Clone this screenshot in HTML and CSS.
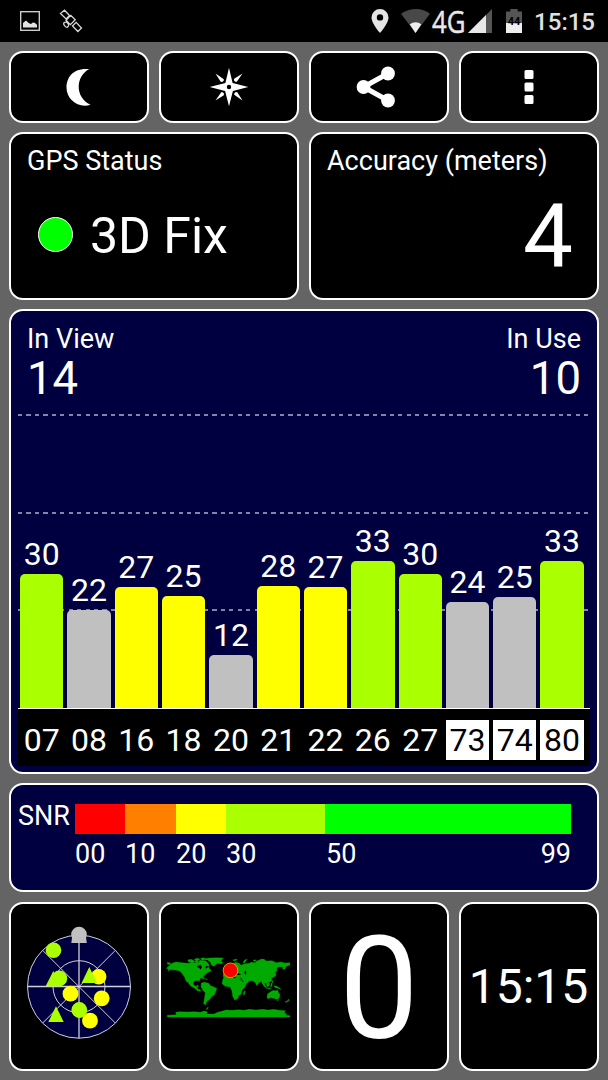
FILE: index.html
```html
<!DOCTYPE html>
<html lang="en">
<head>
<meta charset="utf-8">
<title>GPS Test</title>
<link rel="stylesheet" href="styles.css">
</head>
<body>
<header class="statusbar">
  <svg class="sb-picture" width="20" height="20" viewBox="0 0 20 20"><rect x=".7" y=".7" width="18.6" height="18.6" fill="none" stroke="#d8d8d8" stroke-width="1.3"/><path d="M3 16.5v-4.6l3-2.3 2.7 2.5 2.2.8 2-1.5 1.8.3 2.3 2v2.8z" fill="#e2e2e2"/></svg>
  <svg class="sb-satellite" width="24" height="24" viewBox="0 0 24 24" fill="none" stroke="#d8d8d8" stroke-width="1.3"><path d="M1.5 4.5l4-3.3 5 5.3-3.4 3.4zM13.5 17l3.6-3.6 5.4 5.6-3.6 3.5zM7 11.2l4.8-4.8 4.4 4.4-4.8 4.8zM4.7 14.1c1.2-1 2.2-1.2 3-.9 1 .8 1.8 1.8 2 3-.2 1-.8 1.6-1.4 2.1-1.7-.1-4-2.3-3.6-4.2z"/></svg>
  <div class="sb-right">
    <svg class="sb-pin" width="18" height="24" viewBox="0 0 18 24"><path fill="#e4e4e4" fill-rule="evenodd" d="M9 0a8.500 8.500 0 0 0-8.500 8.500C.5 14.500 9 24 9 24s8.500-9.500 8.500-15.500A8.500 8.500 0 0 0 9 0zm0 5.200a3.200 3.200 0 1 1 0 6.400 3.200 3.200 0 0 1 0-6.400z"/></svg>
    <svg class="sb-wifi" width="30" height="24" viewBox="0 0 30 24"><path d="M0 4.800C8.500-1.600 21.500-1.600 29 4.800L14.500 24z" fill="#484848"/><path d="M8.800 15.500c3.600-2.900 8-2.900 11.500 0L14.500 24z" fill="#eee"/></svg>
    <svg class="sb-network" width="35" height="34" viewBox="0 0 35 34"><text class="network-label" x="1" y="28" textLength="33.500" lengthAdjust="spacingAndGlyphs">4G</text></svg>
    <svg class="sb-signal" width="24" height="24" viewBox="0 0 24 24"><path d="M0 24L24 0v24z" fill="#555"/><path d="M0 24L18 6v18z" fill="#e8e8e8"/></svg>
    <svg class="sb-battery" width="16" height="24" viewBox="0 0 16 24"><path d="M0 2.500h4.300V0h7.400v2.500H16V14H0z" fill="#555"/><path d="M0 14h16v10H0z" fill="#eee"/><text class="battery-label" x="8" y="16">44</text></svg>
    <span class="sb-time">15:15</span>
  </div>
</header>
<main class="dashboard">
  <section class="row row-tools">
    <button class="panel tool" aria-label="Night mode"><svg class="moon" width="26" height="40" viewBox="0 0 26 40"><path d="M24.200 2.100C8 .5 1.500 10.500 1.500 20.500c0 12 11.500 21 24 17.300C10 30.500 10 10 24.200 2.100z"/></svg></button>
    <button class="panel tool" aria-label="Compass"><svg width="40" height="40" viewBox="-20 -20 40 40"><path fill-rule="evenodd" d="M0-19.300L3.600-4 19.300 0 3.900 4 0 19.300-3.900 4-19.300 0-3.600-4zM0-2.200a2.200 2.200 0 1 0 0 4.400 2.200 2.200 0 0 0 0-4.400z"/><g id="ray"><path d="M-13.500-13.500L-5.200-7.800-5.300-6.200-6.800-4.900-8.300-5.200z"/></g><use href="#ray" transform="rotate(90)"/><use href="#ray" transform="rotate(180)"/><use href="#ray" transform="rotate(270)"/></svg></button>
    <button class="panel tool" aria-label="Share"><svg class="share" width="40" height="42" viewBox="0 0 40 42"><path d="M32 7.500L7.500 21 32 34.500" fill="none" stroke="#fff" stroke-width="5"/><circle cx="7.500" cy="21" r="6.900"/><circle cx="32" cy="7.500" r="6.900"/><circle cx="32" cy="34.500" r="6.900"/></svg></button>
    <button class="panel tool" aria-label="Menu"><svg width="10" height="36" viewBox="0 0 10 36"><rect x=".5" y="1" width="9" height="9" rx="1.500"/><rect x=".5" y="13.500" width="9" height="9" rx="1.500"/><rect x=".5" y="26" width="9" height="9" rx="1.500"/></svg></button>
  </section>

  <section class="row row-fix">
    <div class="panel card">
      <h2 class="label">GPS Status</h2>
      <div class="fix"><span class="fix-dot"></span><span class="fix-text">3D Fix</span></div>
    </div>
    <div class="panel card">
      <h2 class="label">Accuracy (meters)</h2>
      <div class="accuracy">4</div>
    </div>
  </section>

  <section class="panel chart">
    <div class="plot">
      <div class="gridline grid-a"></div><div class="gridline grid-b"></div><div class="gridline grid-c"></div>
      <div class="counts">
        <div><div class="count-label">In View</div><div class="count">14</div></div>
        <div class="count-right"><div class="count-label">In Use</div><div class="count">10</div></div>
      </div>
      <div class="bars">
        <div class="col"><span>30</span><i class="bar lime" style="height:134px"></i></div>
        <div class="col"><span>22</span><i class="bar grey" style="height:98px"></i></div>
        <div class="col"><span>27</span><i class="bar yellow" style="height:121px"></i></div>
        <div class="col"><span>25</span><i class="bar yellow" style="height:112px"></i></div>
        <div class="col"><span>12</span><i class="bar grey" style="height:53px"></i></div>
        <div class="col"><span>28</span><i class="bar yellow" style="height:122px"></i></div>
        <div class="col"><span>27</span><i class="bar yellow" style="height:121px"></i></div>
        <div class="col"><span>33</span><i class="bar lime" style="height:147px"></i></div>
        <div class="col"><span>30</span><i class="bar lime" style="height:134px"></i></div>
        <div class="col"><span>24</span><i class="bar grey" style="height:106px"></i></div>
        <div class="col"><span>25</span><i class="bar grey" style="height:111px"></i></div>
        <div class="col"><span>33</span><i class="bar lime" style="height:147px"></i></div>
      </div>
    </div>
    <div class="sats">
      <span>07</span><span>08</span><span>16</span><span>18</span><span>20</span><span>21</span><span>22</span><span>26</span><span>27</span><span class="glonass">73</span><span class="glonass">74</span><span class="glonass">80</span>
    </div>
  </section>

  <section class="panel snr">
    <div class="snr-title">SNR</div>
    <div class="scale">
      <div class="scale-bar"><i class="red"></i><i class="orange"></i><i class="yellow"></i><i class="lime"></i><i class="green"></i></div>
      <div class="scale-labels"><span>00</span><span>10</span><span>20</span><span>30</span><span class="last"><b>50</b><b>99</b></span></div>
    </div>
  </section>

  <section class="row row-bottom">
    <div class="panel tile">
      <svg width="136" height="165" viewBox="11 904 136 165">
        <circle cx="79" cy="986.700" r="51.500" fill="#000040"/>
        <g fill="none" stroke="#d0d0dc" stroke-width="1">
          <circle cx="79" cy="986.700" r="51.500"/><circle cx="79" cy="986.700" r="26"/>
          <path d="M42.600 950.300l72.800 72.800M115.400 950.300l-72.800 72.800"/>
          <path d="M79 935v103.300M27.500 986.500h103" stroke-width="1.300"/>
        </g>
        <g fill="#c0c0c0"><circle cx="79" cy="934.500" r="7.800"/><path d="M71.300 943l1-7h13.500l1 7z"/></g>
        <g fill="#ff0"><circle cx="98.700" cy="976.700" r="7.700"/><circle cx="70.500" cy="993.700" r="7.900"/><circle cx="101.700" cy="998.300" r="7.900"/><circle cx="90" cy="1020.700" r="7.900"/></g>
        <g fill="#af0"><circle cx="53.500" cy="950.300" r="7.800"/><circle cx="59.300" cy="978.500" r="7.900"/><circle cx="79.300" cy="1010" r="7.900"/><path d="M89.300 967l7.700 16H81.600zM53.300 971l7.700 15.200H45.600zM56 1006.300l7.700 15.700H48.300z"/></g>
      </svg>
    </div>
    <div class="panel tile">
      <svg width="136" height="165" viewBox="18 27 408 495">
        <g fill="#00aa00" stroke="#00aa00" stroke-width="1" stroke-linejoin="bevel">
          <path d="M37 202l10 2-2 5-8-2zM51 205l12-4 25 3 14 1 10-3 8 2 10-1 3-6 5-2 5 7 8 2 4 8-6 4 4 5 8-5 3 8 6 3-8 3-7 5-6 4-4 6-9 4-3 10-5-3-9 1-5 6 2 7 7 4 6-4 1 5-5 3 5 5 7 2-1 4-9-2-9-8-12-7-6-9-7-5-4-11-7-11-8-8-12-3-16-1-7 5 3-6-8-3z"/>
          <path d="M98 195l10-2 7 3 6 5-10 2-10-2zM118 193l8-3 9 2-4 4-9 1zM137 190l10-2 3 3-10 3zM140 196l12 2 8 7 3 9-7-1-7-8-11-3zM158 222l6-1 3 5-5 3zM122 196l8 1-2 7-7-1z"/>
          <path d="M140 192l25-3 22-1 18 1-5 5-3 9-12 3-8 8-7-3-4-9-8-7-18-1z"/>
          <path d="M134 247l8-1 8 4-7 1zM151 251l7 1-3 2z"/>
          <path d="M139 264l9-2 13 3 6 7 8 3 10 5-2 7-5 12-9 7-6 8-7 5-4 8 1 3-7-4 2-14 3-19-6-5-7-13z"/>
          <path d="M190 202l10-2 4 3-6 4-7-2z"/>
          <path d="M204 251l8-5 16 1 10 3 14-2 6 10 6 10 10-1-5 10-8 9-2 11-8 5-3 9-9 4-6-11-2-15-5-13-15-2-10-8z"/>
          <path d="M266 290l5-3-2 11-4 3z"/>
          <path d="M204 237L213 234 217 226 226 221 229 211 241 202 253 205 258 211 267 207 282 205 289 202 300 203 305 198 317 194 327 193 334 198 351 197 363 203 377 201 390 204 405 203 404 211 394 214 389 223 383 222 385 216 373 215 365 218 366 227 361 232 363 241 356 247 349 250 350 257 345 261 338 262 336 265 329 264 329 272 323 267 320 260 314 261 308 268 306 273 300 262 292 257 281 258 280 262 273 267 262 270 257 258 256 251 246 252 241 245 231 244 227 252 220 244 214 248 211 254 205 247z"/>
          <path d="M233 195l12-3 1 3-9 3zM264 203l4-7 9-4-5 7-4 5zM294 196l6-2 4 3-6 2zM315 194l8-2 6 4-8 1zM206 224l6-6 2 9-5 4zM359 226l3 5-6 10-8 4 5-8 5-4zM321 260l8 9 6 8-3 1-7-7zM334 268l9-7 1 10-7 5zM348 264l4 2-2 9-4-1 2-5zM334 278l14 2-1 2-13-2zM349 253l4 4 1 8-4-6zM356 272l10 2 8 5 4 5-9-4-8-2z"/>
          <path d="M338 296l8-5 9-5 8 2 4-4 3 8 5 8-3 10-7 3-10-3-7-2-10 3-2-6zM366 314h4l-2 4zM401 312l2 4-8 6-5-1 7-4zM160 336l-2 6-5 2 3-5z"/>
          <path d="M37 361L64 359 62 352 74 350 97 351 119 350 136 352 147 348 157 350 155 357 177 357 188 352 200 349 213 345 233 346 250 344 267 346 283 343 303 345 322 343 340 345 356 343 373 346 391 347 388 354 396 357 391 360 405 362 405 366 37 366z"/>
        </g>
        <g fill="#000"><path d="M243 237l8-2 8 4-9 1zM268 230l5-4 1 9-3 5-2-5zM127 213l9-4 5 6-4 9-5-6-7-1z"/><path d="M255 247l3 1 8 13-3-1z"/></g>
        <circle cx="226.500" cy="226" r="22" fill="red" stroke="#ffb000" stroke-width="2.500"/>
      </svg>
    </div>
    <div class="panel tile speed">0</div>
    <div class="panel tile clock">15:15</div>
  </section>
</main>
</body>
</html>
```

FILE: styles.css
```css
* { box-sizing: border-box; }
body {
  margin: 0;
  width: 608px;
  height: 1080px;
  overflow: hidden;
  background: #646464;
  color: #fff;
  font-family: Roboto, "Liberation Sans", sans-serif;
}
svg { display: block; flex: none; }

.statusbar {
  display: flex;
  align-items: flex-start;
  height: 42px;
  padding: 11px 13px 0 20px;
  background: #000;
}
.sb-satellite { margin: -2px 0 0 19px; }
.sb-right { display: flex; margin: -2px 0 0 auto; color: #e0e0e0; }
.sb-wifi { margin-left: 12.500px; }
.sb-network { margin-top: -4px; overflow: visible; }
.network-label { font: 31px "Open Sans", "Noto Sans", sans-serif; fill: #e8e8e8; stroke: #e8e8e8; stroke-width: .5; }
.sb-signal { margin-left: 2px; }
.sb-battery { margin-left: 14px; }
.battery-label { font: bold 11px Roboto, sans-serif; fill: #000; text-anchor: middle; }
.sb-time { margin: -1px 0 0 12px; font-size: 24px; line-height: 28px; font-weight: 500; }

.dashboard { padding: 9px 9px 0; display: flex; flex-direction: column; gap: 9px; }
.panel {
  border: 2px solid #fff;
  border-radius: 14px;
  background: #000;
  overflow: hidden;
}
.row { display: grid; gap: 10px; }
.row-tools { grid-template-columns: repeat(4, 1fr); height: 72px; }
.row-fix { grid-template-columns: repeat(2, 1fr); height: 168px; }
.row-bottom { grid-template-columns: repeat(4, 1fr); height: 169px; margin-top: 1px; }

.tool { display: flex; align-items: center; justify-content: center; padding: 0; }
.tool svg { fill: #fff; }
.moon { margin-right: 2px; }
.share { margin-right: 6px; }

.card { padding: 11px 16px 0; }
.label { margin: 0; font-size: 27px; line-height: 32px; font-weight: 400; white-space: nowrap; }
.fix { display: flex; align-items: center; margin-top: 29px; padding-left: 11px; }
.fix-dot {
  width: 35px;
  height: 35px;
  margin: 0 17px 3px 0;
  border: 1.5px solid #fff;
  border-radius: 50%;
  background: #0f0;
}
.fix-text { font-size: 50px; line-height: 60px; }
.accuracy { margin-top: 10px; padding-right: 8px; font-size: 89px; line-height: 100px; text-align: right; }

.chart { height: 465px; padding: 0 7px; background: #000040; }
.plot {
  position: relative;
  display: flex;
  flex-direction: column;
  height: 398px;
  border-bottom: 1px solid #fff;
}
.gridline {
  position: absolute;
  left: 0;
  width: 570px;
  height: 2px;
  background: repeating-linear-gradient(90deg, #8484a4 0 4.200px, transparent 4.200px 8.450px);
}
.grid-a { top: 103px; }
.grid-b { top: 201px; }
.grid-c { top: 298px; }
.counts { display: flex; justify-content: space-between; padding: 13px 9px 0 9px; }
.count-right { text-align: right; }
.count-label { font-size: 27px; line-height: 30px; }
.count { font-size: 45.500px; line-height: 49px; }
.bars { position: relative; flex: 1; display: flex; align-items: flex-end; gap: 4px; padding: 0 6.300px 0 2px; }
.col { flex: 1; min-width: 0; text-align: center; }
.col span { display: block; font-size: 32px; line-height: 40px; }
.bar { display: block; border-radius: 5px 5px 0 0; }
.red { background: #f00; }
.orange { background: #ff8000; }
.yellow { background: #ff0; }
.lime { background: #af0; }
.green { background: #0f0; }
.grey { background: #c0c0c0; }
.sats {
  display: flex;
  gap: 4px;
  height: 57px;
  padding: 11px 6.300px 6px 2px;
  background: #000;
  font-size: 32px;
  line-height: 41px;
  text-align: center;
}
.sats span { flex: 1; min-width: 0; }
.sats .glonass { background: #fff; color: #000; }

.snr { display: flex; height: 109px; padding: 19px 26px 0 7px; background: #000040; font-size: 27px; }
.snr-title { width: 57px; line-height: 24px; }
.scale { flex: 1; }
.scale-bar { display: grid; grid-template-columns: 50px 51px 50px 99px 1fr; height: 30px; }
.scale-labels { display: grid; grid-template-columns: 50px 51px 50px 100px 1fr; line-height: 41px; }
.last { display: flex; justify-content: space-between; }
.last b { font-weight: 400; }

.tile { display: flex; align-items: center; justify-content: center; }
.speed { padding-top: 5px; font-size: 142px; line-height: 165px; }
.clock { padding-right: 1px; font-size: 48px; }
```
